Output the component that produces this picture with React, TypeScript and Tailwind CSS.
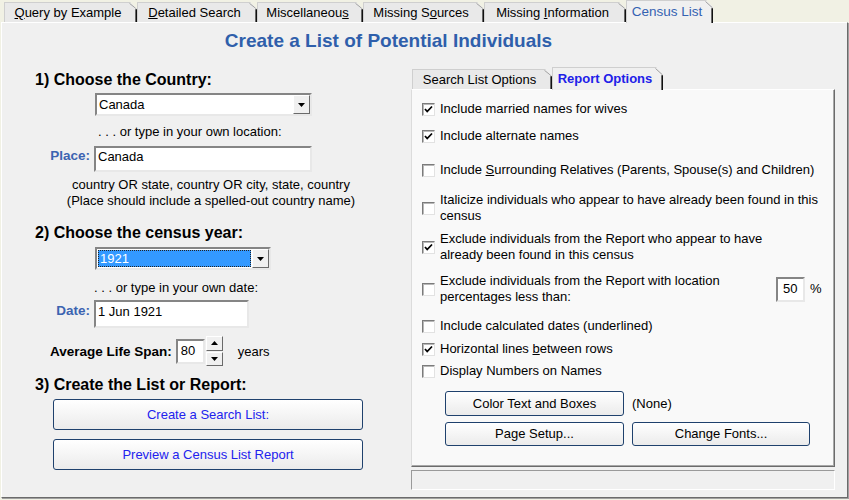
import React from "react";

function Tab({
  children,
  className,
  selected,
}: {
  children: React.ReactNode;
  className: string;
  selected?: boolean;
}) {
  return (
    <div
      className={`relative flex items-center justify-center pr-[6px] border-l border-t border-[#cfcfcf] [clip-path:polygon(0_0,calc(100%_-_7px)_0,100%_7px,100%_100%,0_100%)] ${
        selected
          ? "h-[23px] -mb-px z-10 bg-[#f0f0f0] text-[#3462b2]"
          : "h-[20px] bg-[#e9e9e9] text-black"
      } ${className}`}
    >
      {children}
      <svg className="absolute right-0 top-0 h-full w-[8px]" viewBox="0 0 8 24" preserveAspectRatio="none">
        <line x1="0.5" y1="0.5" x2="7.5" y2="7.5" stroke="#9a9a9a" strokeWidth="1" />
        <line x1="7.2" y1="8" x2="7.2" y2="24" stroke="#111" strokeWidth="1.6" />
      </svg>
    </div>
  );
}

function Arrow({ up }: { up?: boolean }) {
  return (
    <svg width="7" height="4" viewBox="0 0 7 4">
      <polygon points={up ? "3.5,0 7,4 0,4" : "0,0 7,0 3.5,4"} fill="#000" />
    </svg>
  );
}

function DropButton() {
  return (
    <div className="flex h-full w-[17px] items-center justify-center border border-t-white border-l-white border-b-[#6a6a6a] border-r-[#6a6a6a] bg-[#f0f0f0]">
      <Arrow />
    </div>
  );
}

function Check({ on }: { on?: boolean }) {
  return (
    <div className="flex h-[13px] w-[13px] shrink-0 items-center justify-center border border-t-[#7b7b7b] border-l-[#7b7b7b] border-b-[#e2e2e2] border-r-[#e2e2e2] bg-white shadow-[inset_1px_1px_0_#b8b8b8]">
      {on && (
        <svg width="9" height="9" viewBox="0 0 9 9">
          <polyline points="1,4 3.2,6.5 8,1.5" fill="none" stroke="#000" strokeWidth="1.8" />
        </svg>
      )}
    </div>
  );
}

function Option({
  on,
  children,
  className,
}: {
  on?: boolean;
  children: React.ReactNode;
  className: string;
}) {
  return (
    <div className={`flex items-center gap-[5px] ${className}`}>
      <Check on={on} />
      <div className="leading-[16px]">{children}</div>
    </div>
  );
}

function WinButton({
  children,
  className,
}: {
  children: React.ReactNode;
  className: string;
}) {
  return (
    <div
      className={`flex items-center justify-center rounded-[3px] border border-[#1f416d] bg-gradient-to-b from-white to-[#ebebeb] ${className}`}
    >
      {children}
    </div>
  );
}

const sunken =
  "border-2 border-t-[#858585] border-l-[#858585] border-b-[#e8e8e8] border-r-[#e8e8e8] bg-white";

export default function App() {
  return (
    <div className="h-[500px] w-[849px] overflow-hidden bg-[#f1f1e4] font-['Liberation_Sans',Arial,sans-serif] text-[13px] text-black">
      {/* main tabs */}
      <div className="flex h-[22px] items-end pl-[4px]">
        <Tab className="w-[133px]">
          <span>
            <u>Q</u>uery by Example
          </span>
        </Tab>
        <Tab className="w-[120px]">
          <span>
            <u>D</u>etailed Search
          </span>
        </Tab>
        <Tab className="w-[106px]">
          <span>
            Miscellaneou<u>s</u>
          </span>
        </Tab>
        <Tab className="w-[121px]">
          <span>
            Missing S<u>o</u>urces
          </span>
        </Tab>
        <Tab className="w-[142px]">
          <span>
            Missing <u>I</u>nformation
          </span>
        </Tab>
        <Tab className="w-[87px]" selected>
          <span className="text-[13.5px]">Census List</span>
        </Tab>
      </div>

      {/* main panel */}
      <div className="ml-px h-[476px] w-[847px] border border-t-white border-l-white border-r-[#6b6b6b] border-b-[#6b6b6b] bg-[#f0f0f0] shadow-[1px_1px_0_#a0a0a0]">
        <div className="flex h-[37px] items-center justify-center pr-[72px] text-[19px] font-bold text-[#2f5fab]">
          Create a List of Potential Individuals
        </div>

        <div className="flex">
          {/* left column */}
          <div className="flex w-[409px] shrink-0 flex-col">
            <div className="ml-[33px] mt-[10px] text-[16px] font-bold leading-[20px]">
              1) Choose the Country:
            </div>
            <div className={`ml-[93px] mt-[3px] flex h-[23px] w-[217px] items-stretch ${sunken}`}>
              <div className="flex-1 pl-[2px] leading-[19px]">Canada</div>
              <DropButton />
            </div>
            <div className="ml-[96px] mt-[8px] leading-[16px]">. . . or type in your own location:</div>
            <div className="mt-[6px] flex">
              <div className="w-[88px] pt-[2px] text-right text-[13.5px] font-bold leading-[16px] text-[#3c64b1]">
                Place:
              </div>
              <div className={`ml-[4px] h-[26px] w-[218px] pl-[2px] leading-[18px] ${sunken}`}>Canada</div>
            </div>
            <div className="ml-[63px] mt-[5px] w-[292px] text-center leading-[16px]">
              country OR state, country OR city, state, country
              <br />
              (Place should include a spelled-out country name)
            </div>

            <div className="ml-[33px] mt-[14px] text-[16px] font-bold leading-[20px]">
              2) Choose the census year:
            </div>
            <div className={`ml-[93px] mt-[4px] flex h-[23px] w-[176px] items-stretch ${sunken}`}>
              <div className="m-px flex-1 border border-dotted border-[#222] bg-[#3399ff] pl-[1px] leading-[15px] text-white">
                1921
              </div>
              <DropButton />
            </div>
            <div className="ml-[92px] mt-[10px] leading-[16px]">. . . or type in your own date:</div>
            <div className="mt-[4px] flex">
              <div className="w-[88px] pt-[3px] text-right text-[13.5px] font-bold leading-[16px] text-[#3c64b1]">
                Date:
              </div>
              <div className={`ml-[4px] h-[28px] w-[155px] pl-[2px] leading-[20px] ${sunken}`}>1 Jun 1921</div>
            </div>
            <div className="mt-[8px] flex">
              <div className="ml-[48px] pt-[8px] text-[13.5px] font-bold leading-[16px]">Average Life Span:</div>
              <div className={`ml-[4px] mt-[3px] h-[25px] w-[29px] pl-[3px] leading-[19px] ${sunken}`}>80</div>
              <div className="ml-[1px] flex h-[30px] w-[17px] flex-col gap-px">
                <div className="flex flex-1 items-center justify-center border border-t-white border-l-white border-b-[#6a6a6a] border-r-[#6a6a6a] bg-[#f0f0f0]">
                  <Arrow up />
                </div>
                <div className="flex flex-1 items-center justify-center border border-t-white border-l-white border-b-[#6a6a6a] border-r-[#6a6a6a] bg-[#f0f0f0]">
                  <Arrow />
                </div>
              </div>
              <div className="ml-[15px] pt-[8px] leading-[16px]">years</div>
            </div>

            <div className="ml-[33px] mt-[9px] text-[16px] font-bold leading-[20px]">
              3) Create the List or Report:
            </div>
            <WinButton className="ml-[51px] mt-[4px] h-[31px] w-[310px] text-[#2222ee]">Create a Search List:</WinButton>
            <WinButton className="ml-[51px] mt-[9px] h-[31px] w-[310px] text-[#2222ee]">
              Preview a Census List Report
            </WinButton>
          </div>

          {/* right column */}
          <div className="flex w-[424px] flex-col">
            <div className="flex h-[29px] items-end pl-[1px]">
              <Tab className="w-[140px] !h-[20px]">
                <span>Search List Options</span>
              </Tab>
              <Tab className="w-[111px] !h-[23px]" selected>
                <span className="font-bold text-[#2020e8]">Report Options</span>
              </Tab>
            </div>
            <div className="flex h-[378px] flex-col border border-t-white border-l-[#dcdcdc] border-r-[#6b6b6b] border-b-[#6b6b6b] bg-[#f9f9f9] pl-[10px] shadow-[inset_-1px_-1px_0_#a8a8a8]">
              <Option on className="mt-[11px]">Include married names for wives</Option>
              <Option on className="mt-[11px]">Include alternate names</Option>
              <Option className="mt-[18px]">
                Include <u>S</u>urrounding Relatives (Parents, Spouse(s) and Children)
              </Option>
              <Option className="mt-[14px]">
                Italicize individuals who appear to have already been found in this
                <br />
                census
              </Option>
              <Option on className="mt-[7px]">
                Exclude individuals from the Report who appear to have
                <br />
                already been found in this census
              </Option>
              <div className="mt-[10px] flex items-center">
                <Option className="w-[354px]">
                  Exclude individuals from the Report with location
                  <br />
                  percentages less than:
                </Option>
                <div className={`h-[25px] w-[29px] pl-[5px] leading-[19px] ${sunken}`}>50</div>
                <div className="ml-[5px]">%</div>
              </div>
              <Option className="mt-[13px]">Include calculated dates (underlined)</Option>
              <Option on className="mt-[7px]">
                Horizontal lines <u>b</u>etween rows
              </Option>
              <Option className="mt-[6px]">Display Numbers on Names</Option>
              <div className="ml-[23px] mt-[12px] flex items-center gap-[8px]">
                <WinButton className="h-[25px] w-[179px]">Color Text and Boxes</WinButton>
                <div>(None)</div>
              </div>
              <div className="ml-[23px] mt-[6px] flex gap-[8px]">
                <WinButton className="h-[24px] w-[179px]">Page Setup...</WinButton>
                <WinButton className="h-[24px] w-[178px]">Change Fonts...</WinButton>
              </div>
            </div>
            <div className="mt-[3px] h-[20px] border border-t-[#9a9a9a] border-l-[#9a9a9a] border-b-white border-r-white bg-[#f0f0f0]" />
          </div>
        </div>
      </div>
    </div>
  );
}
